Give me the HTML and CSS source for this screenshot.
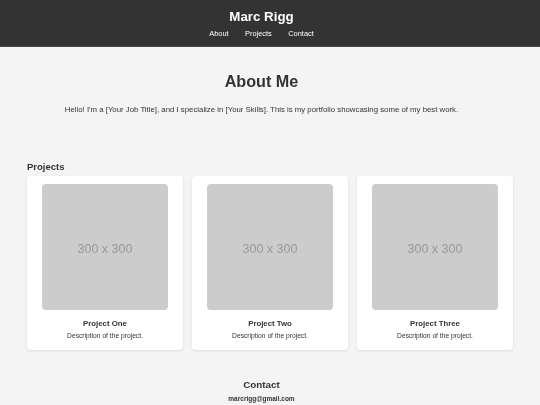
FILE: index.html
```html
<!DOCTYPE html>
<html lang="en">
<head>
<meta charset="utf-8">
<title>Marc Rigg</title>
<link rel="stylesheet" href="styles.css">
</head>
<body>
<header class="site-header">
  <h1 class="site-title">Marc Rigg</h1>
  <nav class="nav">
    <a href="#about">About</a>
    <a href="#projects">Projects</a>
    <a href="#contact">Contact</a>
  </nav>
</header>
<main>
  <section class="about" id="about">
    <h2 class="about-title">About Me</h2>
    <p class="about-text">Hello! I'm a [Your Job Title], and I specialize in [Your Skills]. This is my portfolio showcasing some of my best work.</p>
  </section>
  <section class="projects" id="projects">
    <h3 class="projects-title">Projects</h3>
    <div class="grid">
      <div class="card">
        <div class="thumb">300 x 300</div>
        <div class="card-title">Project One</div>
        <div class="card-desc">Description of the project.</div>
      </div>
      <div class="card">
        <div class="thumb">300 x 300</div>
        <div class="card-title">Project Two</div>
        <div class="card-desc">Description of the project.</div>
      </div>
      <div class="card">
        <div class="thumb">300 x 300</div>
        <div class="card-title">Project Three</div>
        <div class="card-desc">Description of the project.</div>
      </div>
    </div>
  </section>
  <section class="contact" id="contact">
    <h3 class="contact-title">Contact</h3>
    <div class="contact-email">marcrigg@gmail.com</div>
  </section>
</main>
</body>
</html>
```
FILE: styles.css
```css
* { box-sizing: border-box; }
html, body {
  margin: 0;
  padding: 0;
}
body {
  background: #f4f4f4;
  color: #333;
  font-family: "Liberation Sans", Arial, sans-serif;
}
main {
  will-change: transform;
}
.site-header {
  background: #333;
  color: #fff;
  text-align: center;
  padding: 8px 17px 7px 0;
  border-bottom: 1px solid #4a4a4a;
  height: 47px;
  will-change: transform;
}
.site-title {
  margin: 0;
  font-size: 13.3px;
  line-height: 18px;
  font-weight: bold;
}
.nav {
  margin-top: 3px;
  display: flex;
  justify-content: center;
  gap: 16.5px;
  font-size: 7.4px;
  line-height: 10px;
}
.nav a {
  color: #fff;
  text-decoration: none;
}
.about {
  text-align: center;
  padding: 24px 17px 0 0;
}
.about-title {
  margin: 0;
  font-size: 16.2px;
  line-height: 20px;
  font-weight: bold;
}
.about-text {
  margin: 14px 0 0;
  font-size: 7.8px;
  line-height: 10px;
}
.projects {
  padding: 0 27px;
  margin-top: 46px;
}
.projects-title {
  margin: 0 0 3px;
  font-size: 9.5px;
  line-height: 12px;
  font-weight: bold;
}
.grid {
  display: grid;
  grid-template-columns: repeat(3, 1fr);
  gap: 9px;
}
.card {
  background: #fff;
  border-radius: 4px;
  box-shadow: 0 1px 3px rgba(0, 0, 0, 0.1);
  padding: 8px 15px 10px;
  text-align: center;
}
.thumb {
  height: 126px;
  padding-top: 4px;
  background: #ccc;
  border-radius: 4px;
  color: #999;
  font-size: 12.5px;
  display: flex;
  align-items: center;
  justify-content: center;
}
.card-title {
  margin-top: 9px;
  font-size: 7.8px;
  line-height: 10px;
  font-weight: bold;
}
.card-desc {
  margin-top: 2px;
  font-size: 6.7px;
  line-height: 9px;
}
.contact {
  text-align: center;
  margin-top: 28.5px;
  padding-right: 17px;
}
.contact-title {
  margin: 0;
  font-size: 9.8px;
  line-height: 12px;
  font-weight: bold;
}
.contact-email {
  margin-top: 4px;
  font-size: 6.5px;
  line-height: 8px;
  font-weight: bold;
}
```
